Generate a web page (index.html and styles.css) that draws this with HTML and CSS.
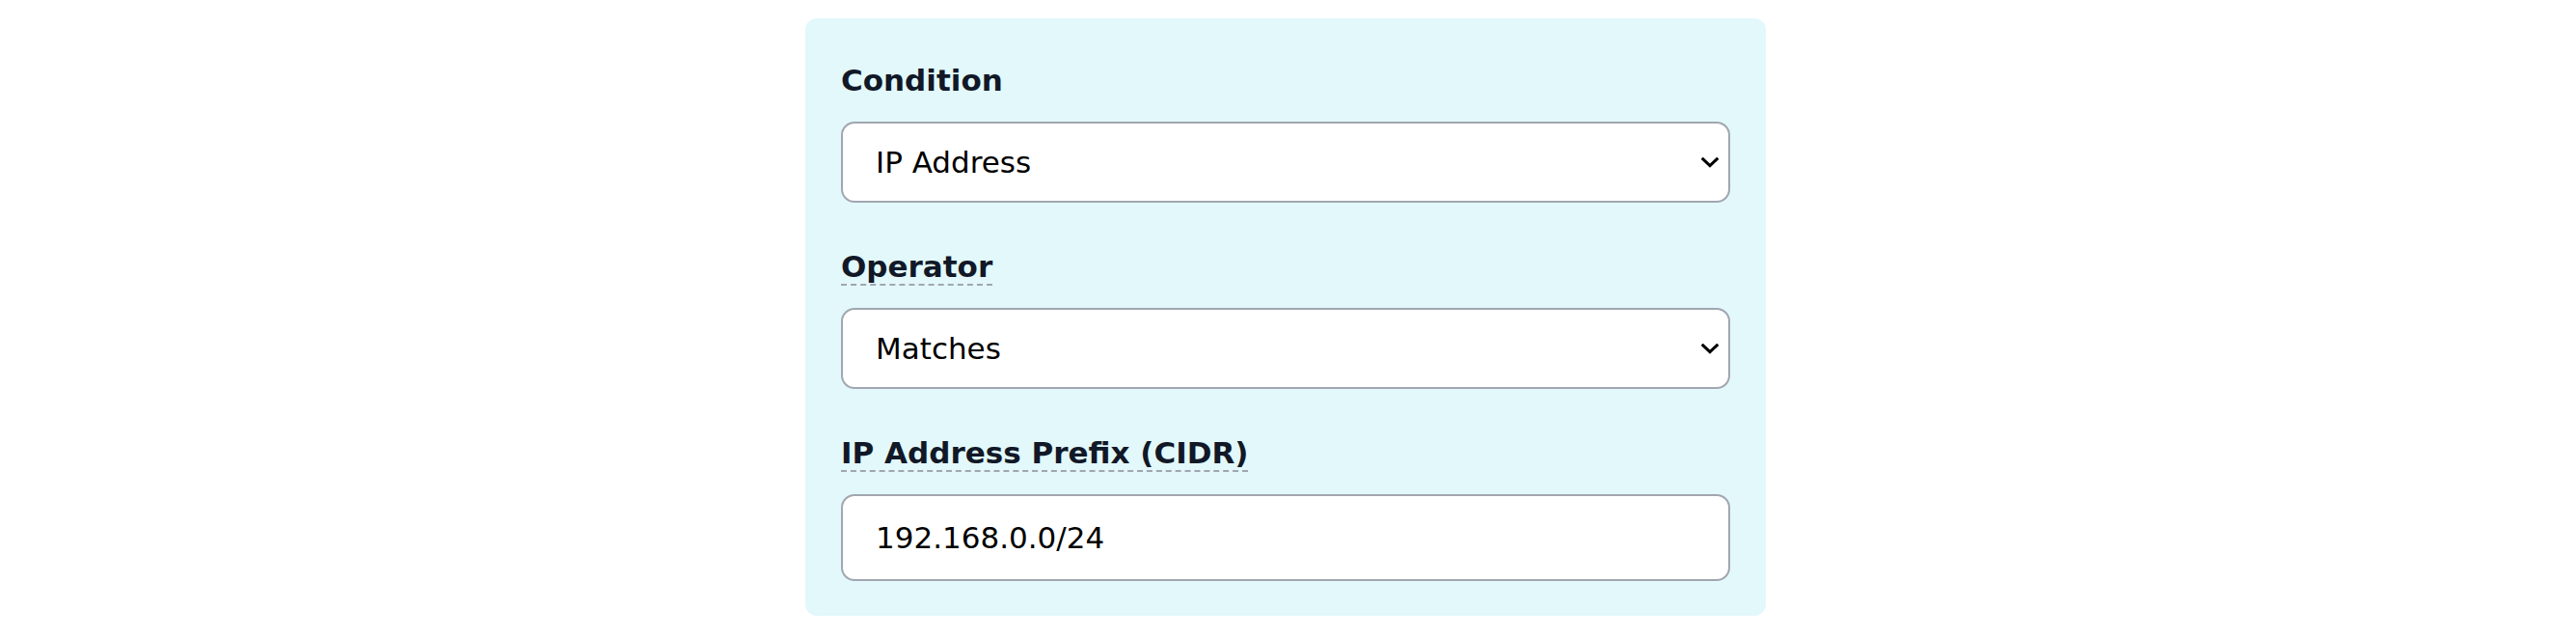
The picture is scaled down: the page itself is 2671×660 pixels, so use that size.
FILE: index.html
```html
<!DOCTYPE html>
<html lang="en">
<head>
    <meta charset="UTF-8">
    <meta name="viewport" content="width=device-width, initial-scale=1.0">
    <title>Rule Condition</title>
    <link rel="stylesheet" href="styles.css">
</head>
<body>
    <div class="page">
        <form class="rule-panel">
            <div class="field">
                <label for="condition">Condition</label>
                <div class="select-wrap">
                    <select id="condition">
                        <option>IP Address</option>
                        <option>Country</option>
                        <option>User Agent</option>
                    </select>
                    <svg class="chevron" width="18" height="11" viewBox="0 0 18 11">
                        <polyline points="1.8,1.8 9,8.6 16.2,1.8" fill="none" stroke="#000" stroke-width="3" stroke-linecap="square"/>
                    </svg>
                </div>
            </div>
            <div class="field">
                <label for="operator"><span class="hint">Operator</span></label>
                <div class="select-wrap">
                    <select id="operator">
                        <option>Matches</option>
                        <option>Does not match</option>
                    </select>
                    <svg class="chevron" width="18" height="11" viewBox="0 0 18 11">
                        <polyline points="1.8,1.8 9,8.6 16.2,1.8" fill="none" stroke="#000" stroke-width="3" stroke-linecap="square"/>
                    </svg>
                </div>
            </div>
            <div class="field">
                <label for="prefix"><span class="hint">IP Address Prefix (CIDR)</span></label>
                <input id="prefix" type="text" value="192.168.0.0/24">
            </div>
        </form>
    </div>
</body>
</html>
```

FILE: styles.css
```css
body {
    font-family: 'DejaVu Sans', 'Verdana', sans-serif;
    font-size: 31px;
    margin: 0;
    padding: 0;
    background: #fff;
}
.page {
    display: flex;
    justify-content: center;
    padding: 19px 5px 0 0;
}
.rule-panel {
    box-sizing: border-box;
    width: 996px;
    padding: 41px 37px 36px;
    background-color: #e2f8fa;
    border-radius: 12px;
}
.field + .field {
    margin-top: 43px;
}
label {
    display: block;
    margin-bottom: 20px;
    line-height: 46px;
    font-weight: bold;
    color: #111827;
}
.hint {
    border-bottom: 2px dashed #a1a6b0;
}
.select-wrap {
    position: relative;
}
select,
input {
    display: block;
    box-sizing: border-box;
    width: 100%;
    margin: 0;
    padding: 0 34px;
    font-family: inherit;
    font-size: 31px;
    color: #000;
    background: #fff;
    border: 2px solid #a1a6b0;
    border-radius: 14px;
    outline: none;
}
select {
    height: 84px;
    -webkit-appearance: none;
    appearance: none;
}
input {
    height: 90px;
}
.chevron {
    position: absolute;
    right: 12px;
    top: 50%;
    margin-top: -5px;
    pointer-events: none;
}
```
